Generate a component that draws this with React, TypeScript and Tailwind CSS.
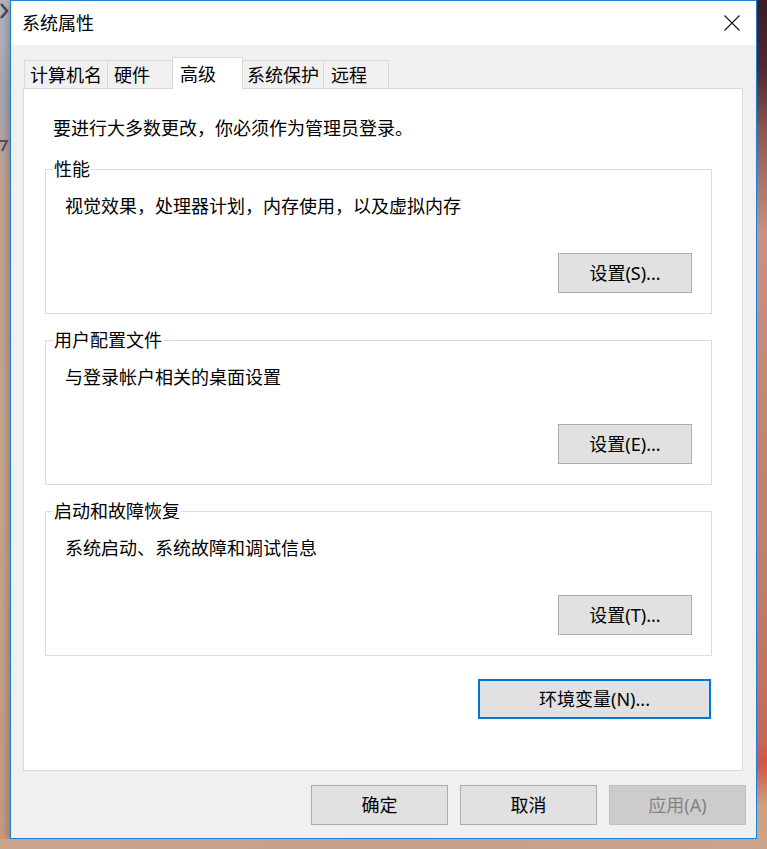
import type { ReactNode } from "react"

const font = "font-['Noto_Sans','Noto_Sans_CJK_SC',sans-serif]"

const tabs = [
  { label: "计算机名", w: "w-[83px] pl-[5px]" },
  { label: "硬件", w: "w-[65px] pl-[6px]" },
  { label: "高级", w: "w-[71px] pl-[7px]", active: true },
  { label: "系统保护", w: "w-[80px] pl-[4px]" },
  { label: "远程", w: "w-[66px] pl-[7px]" },
]

const groups = [
  { title: "性能", desc: "视觉效果，处理器计划，内存使用，以及虚拟内存", btn: "设置(S)..." },
  { title: "用户配置文件", desc: "与登录帐户相关的桌面设置", btn: "设置(E)..." },
  { title: "启动和故障恢复", desc: "系统启动、系统故障和调试信息", btn: "设置(T)..." },
]

function Btn({ children, className = "" }: { children: ReactNode; className?: string }) {
  return (
    <button
      className={`h-[40px] border border-[#adadad] bg-[#e1e1e1] text-[18px] leading-[24px] text-black ${className}`}
    >
      {children}
    </button>
  )
}

export default function App() {
  return (
    <div className={`w-[767px] h-[849px] flex flex-col bg-[#c9a58b] overflow-hidden ${font}`}>
      <div className="flex h-[839px]">
        {/* 桌面背景左侧 */}
        <div className="w-[10px] flex flex-col items-start bg-[linear-gradient(to_bottom,#b9b5c0_0%,#a8a4b3_12%,#c4a38f_22%,#c9a48c_60%,#c59a82_100%)]">
          <svg width="9" height="18" viewBox="0 0 9 18" className="mt-[2px]">
            <path d="M1 2 L7 9 L1 16" fill="none" stroke="#4a4a52" strokeWidth="2.5" />
          </svg>
          <svg width="9" height="16" viewBox="0 0 9 16" className="mt-[118px]">
            <path d="M0 3 H7 L2 13" fill="none" stroke="#55545c" strokeWidth="2" />
          </svg>
        </div>

        {/* 窗口 */}
        <div className="w-[747px] h-[839px] flex flex-col border border-[#1a80d8] bg-[#f0f0f0] shadow-[0_2px_10px_rgba(0,0,0,0.35)]">
          <div className="h-[44px] bg-white flex items-center justify-between pl-[11px] pr-[16px]">
            <span className="text-[18px] leading-[24px] text-black">系统属性</span>
            <svg width="16" height="16" viewBox="0 0 16 16">
              <path d="M0.5 0.5 L15.5 15.5 M15.5 0.5 L0.5 15.5" stroke="#111" strokeWidth="1.1" />
            </svg>
          </div>

          {/* 选项卡 */}
          <div className="flex items-end pl-[13px] pt-[12px]">
            {tabs.map((t, i) => (
              <div
                key={t.label}
                className={`${t.w} flex items-center border-t border-[#d9d9d9] text-[18px] leading-[24px] text-black ${
                  t.active
                    ? "h-[32px] -mb-px bg-white border-l border-r relative z-10"
                    : `h-[28px] bg-[#f0f0f0] ${i === 3 ? "" : "border-l"} ${i === tabs.length - 1 ? "border-r" : ""}`
                }`}
              >
                {t.label}
              </div>
            ))}
          </div>

          {/* 面板 */}
          <div className="ml-[12px] mr-[13px] h-[683px] border border-[#d9d9d9] bg-white flex flex-col">
            <p className="pt-[27px] pl-[29px] text-[18px] leading-[24px] text-black">
              要进行大多数更改，你必须作为管理员登录。
            </p>

            {groups.map((g, i) => (
              <fieldset
                key={g.title}
                className={`${i === 0 ? "mt-[19px]" : "mt-[16px]"} ml-[21px] mr-[30px] border border-[#dcdcdc] pl-[19px] pr-[19px] pt-[15px] pb-[20px] flex flex-col`}
              >
                <legend className="-ml-[12px] px-[1px] text-[18px] leading-[20px] text-black">{g.title}</legend>
                <p className="text-[18px] leading-[24px] text-black">{g.desc}</p>
                <Btn className="mt-[35px] self-end w-[134px]">{g.btn}</Btn>
              </fieldset>
            ))}

            <div className="flex justify-end mr-[31px] mt-[23px]">
              <button className="w-[233px] h-[40px] border-2 border-[#0078d7] bg-[#e1e1e1] text-[18px] leading-[24px] text-black">
                环境变量(N)...
              </button>
            </div>
          </div>

          {/* 底部按钮 */}
          <div className="flex justify-end gap-[12px] pr-[10px] mt-[14px]">
            <Btn className="w-[137px]">确定</Btn>
            <Btn className="w-[137px]">取消</Btn>
            <button className="w-[137px] h-[40px] border border-[#bfbfbf] bg-[#cccccc] text-[18px] leading-[24px] text-[#838383]">
              应用(A)
            </button>
          </div>
        </div>

        {/* 桌面背景右侧 */}
        <div className="flex-1 bg-[linear-gradient(to_bottom,#3a1d25_0%,#4b2a31_8%,#8a5a58_16%,#c4928a_28%,#c08678_50%,#bb7f70_70%,#c4685e_88%,#d0554f_91%,#c9a184_96%,#c9a58b_100%)]" />
      </div>
      <div className="h-[10px] bg-[linear-gradient(to_right,#c9a58b,#c4a088_50%,#c9a48a)]" />
    </div>
  )
}
